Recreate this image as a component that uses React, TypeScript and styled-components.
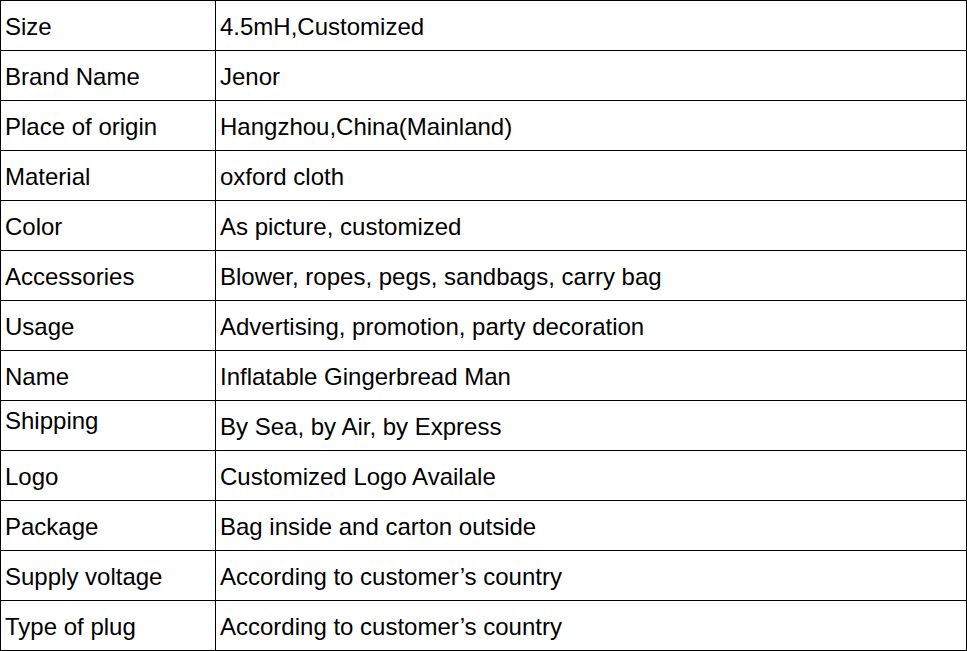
import React from "react";
import styled, { createGlobalStyle } from "styled-components";

const Global = createGlobalStyle`
  html, body { margin: 0; padding: 0; background: #fff; }
`;

const Table = styled.table`
  border-collapse: collapse;
  width: 967px;
  table-layout: fixed;
  font-family: "Liberation Sans", Arial, sans-serif;
  font-size: 24px;
  color: #000;
`;

const Row = styled.tr`
  height: 50px;
`;

const Cell = styled.td<{ $top?: boolean }>`
  border: 1px solid #000;
  padding: ${(p) => (p.$top ? "6px 4px 0 4px" : "2px 4px 0 4px")};
  vertical-align: ${(p) => (p.$top ? "top" : "middle")};
  white-space: nowrap;
  line-height: 27px;
  box-sizing: border-box;
`;

const LabelCol = styled.col`
  width: 215px;
`;

const rows: [string, string][] = [
  ["Size", "4.5mH,Customized"],
  ["Brand Name", "Jenor"],
  ["Place of origin", "Hangzhou,China(Mainland)"],
  ["Material", "oxford cloth"],
  ["Color", "As picture, customized"],
  ["Accessories", "Blower, ropes, pegs, sandbags, carry bag"],
  ["Usage", "Advertising, promotion, party decoration"],
  ["Name", "Inflatable Gingerbread Man"],
  ["Shipping", "By Sea, by Air, by Express"],
  ["Logo", "Customized Logo Availale"],
  ["Package", "Bag inside and carton outside"],
  ["Supply voltage", "According to customer\u2019s country"],
  ["Type of plug", "According to customer\u2019s country"],
];

export default function App() {
  return (
    <>
      <Global />
      <Table>
        <colgroup>
          <LabelCol />
          <col />
        </colgroup>
        <tbody>
          {rows.map(([k, v]) => (
            <Row key={k}>
              <Cell $top={k === "Shipping"}>{k}</Cell>
              <Cell>{v}</Cell>
            </Row>
          ))}
        </tbody>
      </Table>
    </>
  );
}
